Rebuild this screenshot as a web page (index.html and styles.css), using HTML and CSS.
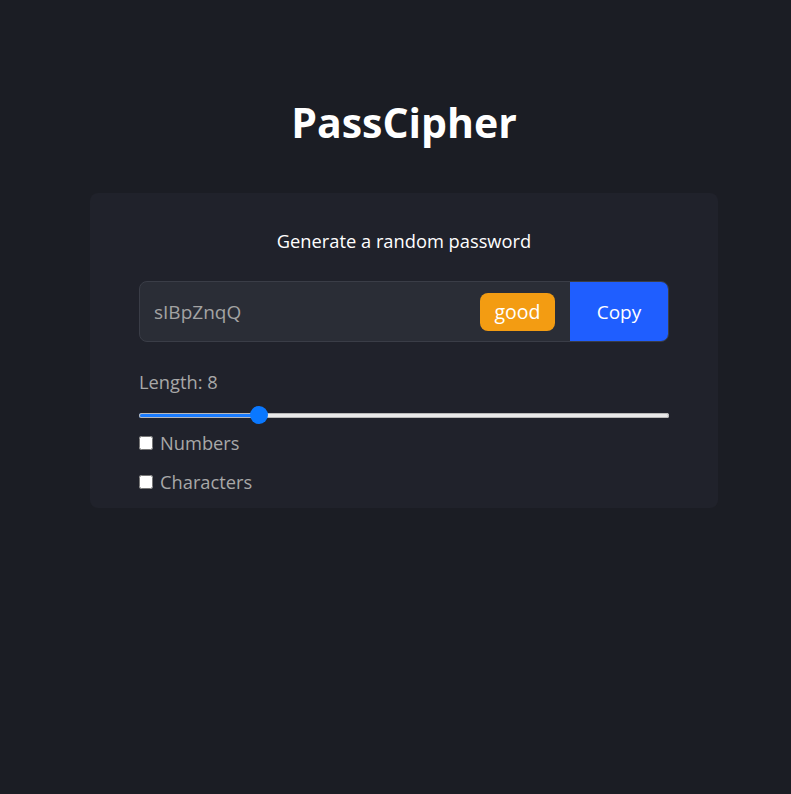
FILE: index.html
```html
<!DOCTYPE html>
<html lang="en">
<head>
<meta charset="utf-8">
<title>PassCipher</title>
<link rel="stylesheet" href="styles.css">
</head>
<body>
<main class="page">
  <h1 class="title">PassCipher</h1>
  <section class="card">
    <p class="subtitle">Generate a random password</p>
    <div class="input-group">
      <input class="password" type="text" value="sIBpZnqQ" readonly>
      <span class="badge">good</span>
      <button class="copy" type="button">Copy</button>
    </div>
    <label class="length-label" for="len">Length: 8</label>
    <input class="range" id="len" type="range" min="0" max="37" value="8" style="--fill: 22.5%">
    <label class="check"><input type="checkbox"> Numbers</label>
    <label class="check"><input type="checkbox"> Characters</label>
  </section>
</main>
</body>
</html>
```

FILE: styles.css
```css
html, body {
  margin: 0;
  padding: 0;
  background: #1b1d24;
  height: 100%;
}
body {
  font-family: "Open Sans", "Noto Sans", sans-serif;
  color: #fff;
  padding-left: 17px;
  box-sizing: border-box;
}
.page {
  display: flex;
  flex-direction: column;
  align-items: center;
  padding-top: 92px;
}
.title {
  margin: 0;
  font-size: 41px;
  font-weight: 700;
  line-height: 60px;
}
.card {
  margin-top: 41px;
  width: 628px;
  box-sizing: border-box;
  background: #20222b;
  border-radius: 8px;
  padding: 33px 49px 6px;
  display: flex;
  flex-direction: column;
}
.subtitle {
  margin: 0 0 25px;
  text-align: center;
  font-size: 18.3px;
  line-height: 30px;
}
.input-group {
  display: flex;
  align-items: center;
  height: 61px;
  box-sizing: border-box;
  border: 1px solid #3a3d47;
  border-radius: 8px;
  background: #2a2d36;
  overflow: hidden;
}
.password {
  flex: 1;
  min-width: 0;
  background: transparent;
  border: 0;
  outline: none;
  color: #a3a3a3;
  font-family: inherit;
  font-size: 19px;
  padding: 0 14px;
  height: 100%;
}
.badge {
  background: #f39c12;
  color: #fff;
  font-size: 19.5px;
  line-height: 38px;
  height: 38px;
  width: 75px;
  box-sizing: border-box;
  text-align: center;
  border-radius: 8px;
  margin-right: 15px;
}
.copy {
  height: 100%;
  width: 98px;
  border: 0;
  background: #1f5eff;
  color: #fff;
  font-family: inherit;
  font-size: 19px;
}
.length-label {
  margin-top: 27px;
  color: #a8a8a8;
  font-size: 18.3px;
  line-height: 26px;
}
.range {
  -webkit-appearance: none;
  appearance: none;
  margin: 11px 0 0;
  width: 100%;
  height: 18px;
  background: transparent;
}
.range::-webkit-slider-runnable-track {
  height: 5px;
  border-radius: 3px;
  background: linear-gradient(to right, #1a7cff 0, #1a7cff var(--fill), #e9e9e9 var(--fill), #e9e9e9 100%);
  box-shadow: inset 0 0 0 1px #b8b8b8;
}
.range::-webkit-slider-thumb {
  -webkit-appearance: none;
  appearance: none;
  width: 18px;
  height: 18px;
  border-radius: 50%;
  background: #0a78ff;
  margin-top: -6.5px;
  border: 0;
}
.check {
  display: flex;
  align-items: center;
  color: #a8a8a8;
  font-size: 18.3px;
  line-height: 26px;
  margin-top: 6px;
  margin-bottom: 7px;
}
.check input {
  margin: 0 7px 0 0;
  width: 14px;
  height: 14px;
}
```
